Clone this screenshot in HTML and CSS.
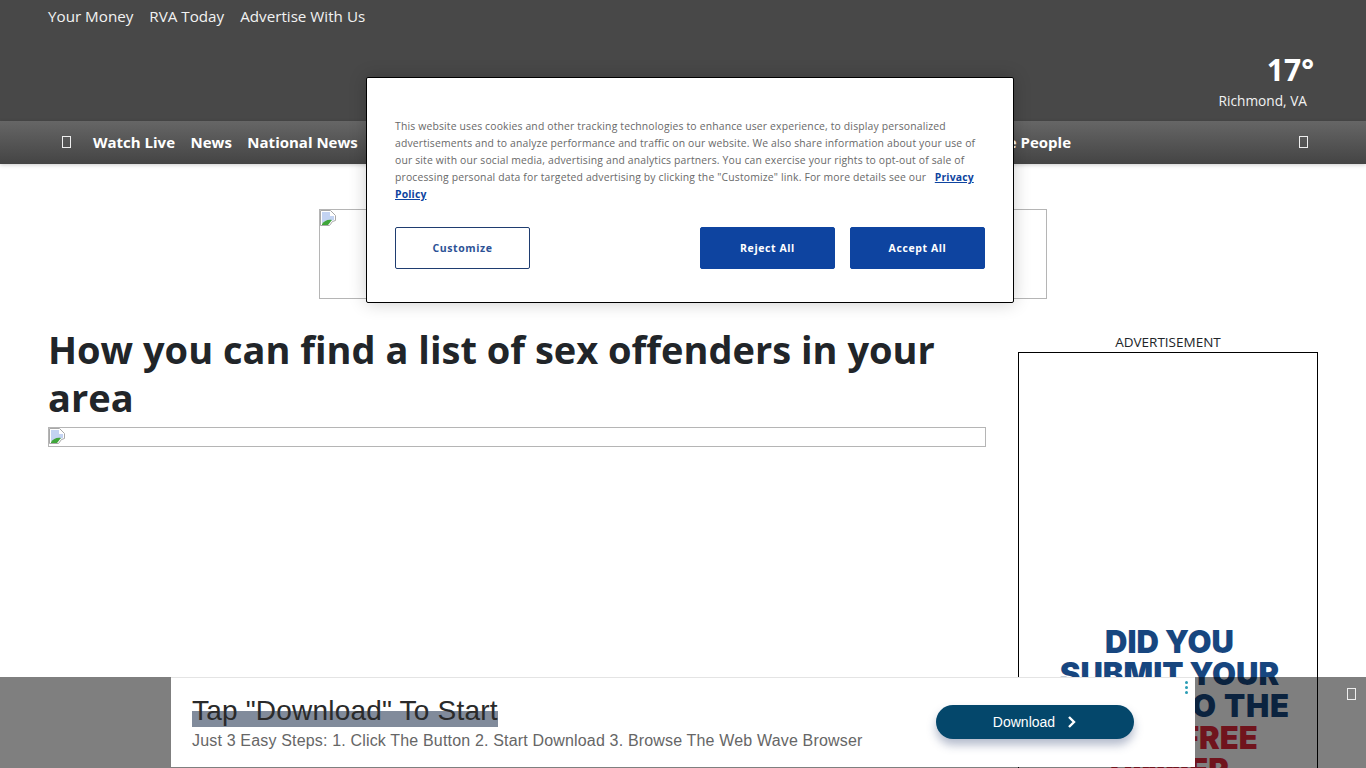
FILE: index.html
```html
<!DOCTYPE html>
<html>
  <head>
    <title>How you can find a list of sex offenders in your area</title>
    <meta charset="utf-8" />
    <link rel="stylesheet" href="styles.css">
  </head>
  <body>
    <header class="top-bar">
      <div class="top-links">
        <a href="#">Your Money</a>
        <a href="#">RVA Today</a>
        <a href="#">Advertise With Us</a>
      </div>
      <div class="weather">
        <div class="temp">17°</div>
        <div class="city">Richmond, VA</div>
      </div>
    </header>
    <nav class="nav-bar">
      <span class="tofu"></span>
      <a href="#">Watch Live</a>
      <a href="#">News</a>
      <a href="#">National News</a>
      <a href="#" class="nav-last">Positive People</a>
      <span class="tofu nav-search"></span>
    </nav>

    <div class="banner">
      <svg class="broken" viewBox="0 0 16 16"><path d="M.5.5h10l5 5v5l-3 1-3 4h-9z" fill="#fff" stroke="#a8a8a8"/><path d="M2 2h8v4h4v4l-12 3z" fill="#c3d3f2"/><path d="M2 15v-1c2-3 6-5 10-4l-4 5z" fill="#3fa53a"/></svg>
    </div>

    <div class="content">
      <main>
        <h1>How you can find a list of sex offenders in your area</h1>
        <div class="hero">
          <svg class="broken" viewBox="0 0 16 16"><path d="M.5.5h10l5 5v5l-3 1-3 4h-9z" fill="#fff" stroke="#a8a8a8"/><path d="M2 2h8v4h4v4l-12 3z" fill="#c3d3f2"/><path d="M2 15v-1c2-3 6-5 10-4l-4 5z" fill="#3fa53a"/></svg>
        </div>
      </main>
      <aside>
        <div class="ad-label">ADVERTISEMENT</div>
        <div class="ad-box">
          <p class="ad-copy">
            <span>DID YOU</span>
            <span>SUBMIT YOUR</span>
            <span class="wide">PHOTO TO THE</span>
            <span class="red">FOR A FREE</span>
            <span class="red">DINNER</span>
          </p>
        </div>
      </aside>
    </div>

    <div class="cookie-modal">
      <p class="cookie-text">This website uses cookies and other tracking technologies to enhance user experience, to display personalized advertisements and to analyze performance and traffic on our website. We also share information about your use of our site with our social media, advertising and analytics partners. You can exercise your rights to opt-out of sale of processing personal data for targeted advertising by clicking the "Customize" link. For more details see our&nbsp;&nbsp; <a href="#">Privacy Policy</a></p>
      <div class="cookie-actions">
        <button class="btn btn-outline">Customize</button>
        <div class="btn-group">
          <button class="btn btn-solid">Reject All</button>
          <button class="btn btn-solid">Accept All</button>
        </div>
      </div>
    </div>

    <div class="sticky-ad">
      <div class="ad-card">
        <div class="ad-card-text">
          <div class="ad-title">Tap "Download" To Start</div>
          <div class="ad-sub">Just 3 Easy Steps: 1. Click The Button 2. Start Download 3. Browse The Web Wave Browser</div>
        </div>
        <a href="#" class="download">Download
          <svg viewBox="0 0 10 14" width="10" height="14"><path d="M2 2l5 5-5 5" fill="none" stroke="#fff" stroke-width="2.4"/></svg>
        </a>
        <span class="ad-dots"><i></i><i></i><i></i></span>
      </div>
      <span class="tofu ad-close"></span>
    </div>
  </body>
</html>
```

FILE: styles.css
```css
html, body {
  height: 100%;
}
body {
  margin: 0;
  overflow: hidden;
  background: #fff;
  color: #212529;
  font-family: "Open Sans", sans-serif;
}
a {
  color: inherit;
  text-decoration: none;
}
.top-bar {
  height: 121px;
  box-sizing: border-box;
  background: #484848;
  color: #f2f2f2;
  display: flex;
  justify-content: space-between;
  padding: 6px 59px 0 48px;
}
.top-links {
  display: flex;
  gap: 16px;
  font-size: 15.2px;
  line-height: 20px;
}
.weather {
  padding-top: 46px;
  text-align: right;
}
.temp {
  font-size: 30px;
  font-weight: 700;
  line-height: 36px;
  color: #fff;
  margin-right: -7px;
}
.city {
  font-size: 13.7px;
  line-height: 20px;
  margin-top: 3px;
}
.nav-bar {
  height: 43px;
  box-sizing: border-box;
  background: linear-gradient(#666, #444);
  color: #fff;
  display: flex;
  align-items: center;
  gap: 15.5px;
  padding: 0 58px 2px 62px;
  font-size: 15px;
  font-weight: 700;
  box-shadow: 0 1px 4px rgba(0, 0, 0, 0.2);
}
.tofu {
  display: inline-block;
  width: 7px;
  height: 10px;
  border: 1px solid #eee;
}
.nav-bar .tofu:first-child {
  margin-right: 6.5px;
}
.nav-last {
  margin-left: auto;
}
.nav-search {
  margin-left: 212.5px;
}
.banner {
  width: 726px;
  height: 88px;
  margin: 45px auto 0;
  border: 1px solid #b5b5b5;
}
.broken {
  display: block;
  width: 16px;
  height: 16px;
}
.content {
  display: grid;
  grid-template-columns: 938px 300px;
  gap: 32px;
  padding: 26px 48px 0;
}
h1 {
  margin: 0;
  font-size: 38px;
  line-height: 48px;
  font-weight: 700;
}
.hero {
  height: 18px;
  margin-top: 6px;
  border: 1px solid #b5b5b5;
}
.ad-label {
  margin-top: 8px;
  text-align: center;
  font-size: 13.5px;
  line-height: 19px;
}
.ad-box {
  height: 600px;
  box-sizing: border-box;
  border: 1px solid #000;
  padding: 273px 0 0 3px;
}
.ad-copy {
  margin: 0;
  text-align: center;
  font-family: Inter, sans-serif;
  font-weight: 900;
  font-size: 31px;
  line-height: 32px;
  color: #17467f;
}
.ad-copy span {
  display: block;
}
.ad-copy .wide {
  letter-spacing: 0.8px;
}
.ad-copy .red {
  color: #e0283a;
}
.cookie-modal {
  position: absolute;
  left: 366px;
  top: 77px;
  width: 648px;
  height: 226px;
  box-sizing: border-box;
  padding: 40px 28px 0;
  background: #fff;
  border: 1px solid #000;
  border-radius: 2px;
  box-shadow: 0 0 18px rgba(0, 0, 0, 0.2);
}
.cookie-text {
  margin: 0;
  font-size: 10.4px;
  line-height: 17px;
  letter-spacing: 0.16px;
  color: #696969;
}
.cookie-text a {
  color: #0e44a0;
  font-weight: 700;
  text-decoration: underline;
}
.cookie-actions {
  display: flex;
  justify-content: space-between;
  margin-top: 24px;
}
.btn-group {
  display: flex;
  gap: 15px;
}
.btn {
  width: 135px;
  height: 42px;
  border-radius: 2px;
  font-family: "Open Sans", sans-serif;
  font-size: 10.5px;
  font-weight: 700;
  letter-spacing: 0.6px;
  border: 1px solid #0e44a0;
}
.btn-outline {
  background: #fff;
  color: #2d5296;
  border-color: #1f3d70;
}
.btn-solid {
  background: #0e44a0;
  color: #fff;
}
.sticky-ad {
  position: fixed;
  left: 0;
  right: 0;
  bottom: 0;
  height: 91px;
  background: rgba(0, 0, 0, 0.5);
}
.ad-card {
  position: relative;
  width: 1024px;
  height: 90px;
  box-sizing: border-box;
  margin-left: 171px;
  padding: 0 61px 0 21px;
  background: #fff;
  border-top: 1px solid #e4e4e4;
  display: flex;
  align-items: center;
  justify-content: space-between;
  font-family: "Liberation Sans", sans-serif;
}
.ad-title {
  display: inline-block;
  font-size: 28px;
  line-height: 32px;
  letter-spacing: 0.2px;
  color: #2a2a2a;
  background: linear-gradient(transparent 50%, #818b9b 50%);
}
.ad-sub {
  font-size: 16px;
  line-height: 20px;
  margin-top: 4px;
  letter-spacing: 0.17px;
  color: #666;
}
.download {
  width: 198px;
  height: 34px;
  margin-bottom: 2px;
  border-radius: 17px;
  background: #04476b;
  color: #fff;
  font-size: 14px;
  display: flex;
  align-items: center;
  justify-content: center;
  gap: 12px;
  box-shadow: 0 6px 10px rgba(40, 60, 110, 0.35);
}
.ad-dots {
  position: absolute;
  top: 3px;
  right: 7px;
  display: flex;
  flex-direction: column;
  gap: 2px;
}
.ad-dots i {
  width: 3px;
  height: 3px;
  border-radius: 50%;
  background: #2a9db5;
}
.ad-close {
  position: absolute;
  top: 11px;
  right: 10px;
}
```
